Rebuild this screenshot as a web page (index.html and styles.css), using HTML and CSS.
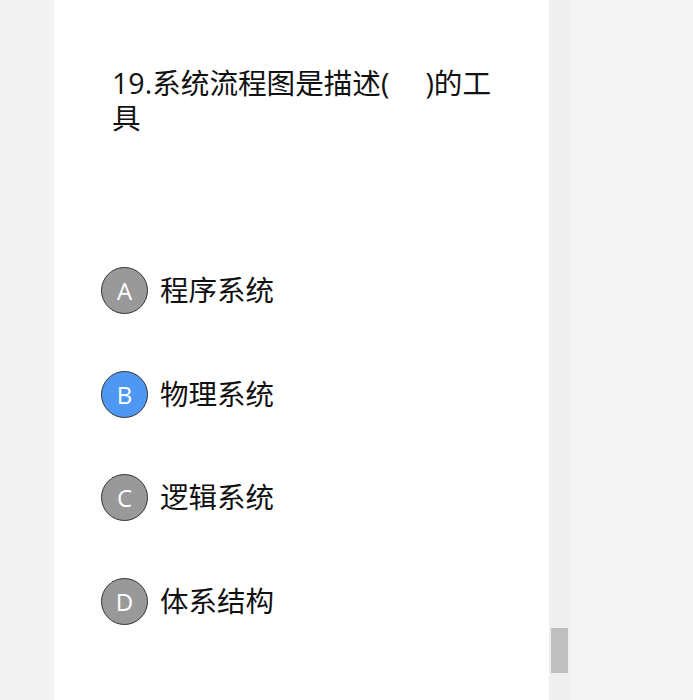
FILE: index.html
```html
<!DOCTYPE html>
<html lang="zh">
<head>
<meta charset="utf-8">
<link rel="stylesheet" href="styles.css">
</head>
<body>
<div class="page">
  <div class="side-left"></div>
  <main class="panel">
    <div class="question">19.系统流程图是描述(　&nbsp;)的工具</div>
    <ul class="options">
      <li class="option"><span class="badge">A</span><span class="label">程序系统</span></li>
      <li class="option"><span class="badge selected">B</span><span class="label">物理系统</span></li>
      <li class="option"><span class="badge">C</span><span class="label">逻辑系统</span></li>
      <li class="option"><span class="badge">D</span><span class="label">体系结构</span></li>
    </ul>
  </main>
  <div class="scrollbar"><div class="thumb"></div></div>
  <div class="side-right"></div>
</div>
</body>
</html>
```
FILE: styles.css
```css
* { box-sizing: border-box; }
html, body { margin: 0; padding: 0; height: 100%; }
body {
  font-family: "Open Sans", "Noto Sans CJK SC", sans-serif;
  color: #111;
  background: #f4f4f4;
  overflow: hidden;
}
.page {
  display: flex;
  height: 700px;
}
.side-left {
  width: 54px;
  background: #f3f3f3;
}
.panel {
  width: 495px;
  background: #fff;
  padding: 65px 40px 0 58px;
}
.question {
  font-size: 28.6px;
  line-height: 35px;
}
.options {
  list-style: none;
  margin: 132px 0 0 -11px;
  padding: 0;
  display: flex;
  flex-direction: column;
  gap: 56.5px;
}
.option {
  display: flex;
  align-items: center;
  gap: 12px;
  height: 47px;
}
.badge {
  width: 47px;
  height: 47px;
  border-radius: 50%;
  background: #999;
  border: 1px solid #333;
  color: #fff;
  font-size: 24px;
  display: flex;
  align-items: center;
  justify-content: center;
  flex: none;
}
.badge.selected {
  background: #4e98f3;
}
.label {
  font-size: 28.5px;
  line-height: 1;
}
.scrollbar {
  width: 21px;
  background: #efefef;
  position: relative;
  padding-top: 628px;
  display: flex;
  justify-content: center;
}
.thumb {
  width: 17px;
  height: 45px;
  background: #bfbfbf;
}
.side-right {
  flex: 1;
  background: #f4f4f4;
}
```
